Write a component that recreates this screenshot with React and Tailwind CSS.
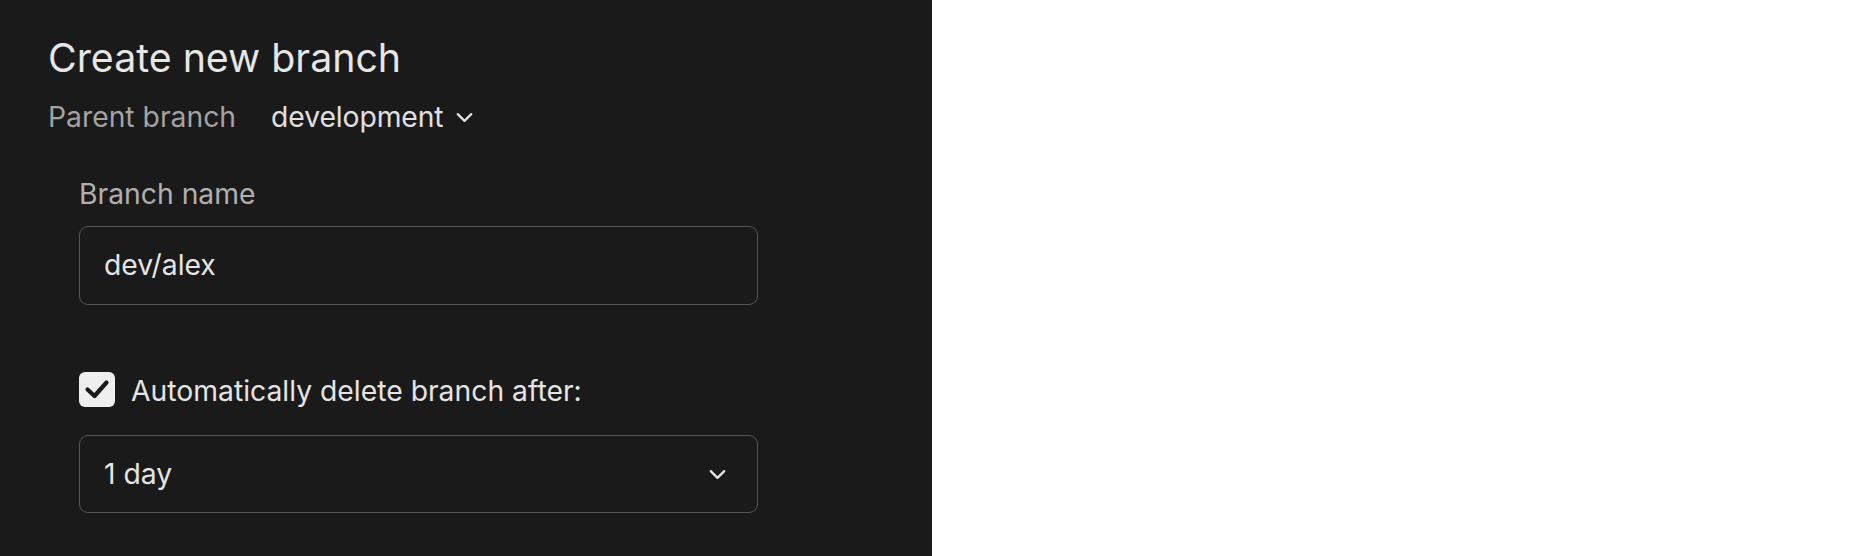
import { ChevronDown } from 'lucide-react'

function CheckBox() {
  return (
    <span className="flex items-center justify-center w-[36px] h-[35px] rounded-[6px] bg-[#efefef] shrink-0">
      <svg width="36" height="35" viewBox="0 0 36 35" fill="none">
        <polyline
          points="8.5,17.5 15.5,24 27.5,10.5"
          stroke="#1a1a1a"
          strokeWidth="4.2"
          strokeLinecap="round"
          strokeLinejoin="round"
        />
      </svg>
    </span>
  )
}

export default function App() {
  return (
    <div className="flex w-full h-[556px] bg-white font-['Inter','Noto_Sans',sans-serif]">
      {/* Left dark panel */}
      <div className="w-[932px] h-full bg-[#1a1a1a] pl-[48px] pt-[35px] shrink-0">
        <h1 className="text-[39.3px] leading-[46px] font-normal text-[#e6e6e6]">Create new branch</h1>

        <div className="flex items-center h-[36px] mt-[18px] text-[28.3px]">
          <span className="text-[#a3a3a3]">Parent branch</span>
          <span className="ml-[35px] text-[#e0e0e0] tracking-[-0.1px]">development</span>
          <ChevronDown size={27} strokeWidth={2} className="ml-[7px] text-[#e0e0e0]" />
        </div>

        {/* Form */}
        <div className="ml-[31px] mt-[41px] w-[679px]">
          <label className="block text-[28.3px] leading-[36px] text-[#b0b0b0]">Branch name</label>
          <div className="mt-[14px] h-[79px] flex items-center rounded-[9px] border-[1.5px] border-[#555555] pl-[24px] text-[28.3px] text-[#e4e4e4]">
            dev/alex
          </div>

          <div className="flex items-center gap-[16px] mt-[65px]">
            <CheckBox />
            <span className="text-[28.3px] leading-[36px] text-[#e4e4e4] pt-[3px]">Automatically delete branch after:</span>
          </div>

          <div className="mt-[26px] h-[78px] flex items-center justify-between rounded-[9px] border-[1.5px] border-[#555555] pl-[24px] pr-[26px] text-[28.3px] text-[#e4e4e4]">
            <span>1 day</span>
            <ChevronDown size={27} strokeWidth={2} className="text-[#e4e4e4]" />
          </div>
        </div>
      </div>

      {/* Right empty area */}
      <div className="flex-1 h-full bg-white" />
    </div>
  )
}
